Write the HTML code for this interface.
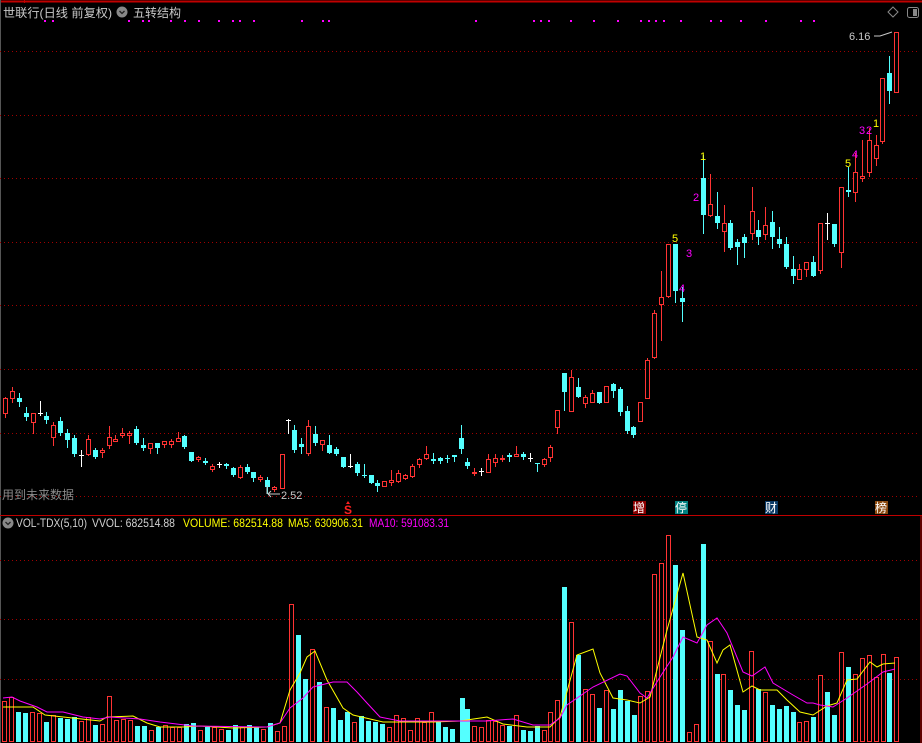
<!DOCTYPE html>
<html><head><meta charset="utf-8">
<style>
html,body{margin:0;padding:0;background:#000;width:922px;height:743px;overflow:hidden}
svg{display:block}
text{font-family:"Liberation Sans","Noto Sans CJK SC",sans-serif}
</style></head><body>
<svg id="s" width="922" height="743" viewBox="0 0 922 743" xmlns="http://www.w3.org/2000/svg">
<rect width="922" height="743" fill="#000"/>
<line x1="0" y1="1.5" x2="922" y2="1.5" stroke="#c00000" stroke-width="2"/>
<line x1="24.5" y1="0" x2="24.5" y2="3" stroke="#c00000"/>
<line x1="0.5" y1="0" x2="0.5" y2="743" stroke="#555"/>
<line x1="921" y1="515" x2="921" y2="743" stroke="#c00000"/>
<g id="grid" stroke="#a00000" stroke-dasharray="1 3"></g>
<line x1="0" y1="515.5" x2="922" y2="515.5" stroke="#c00000"/>
<text x="3" y="17" fill="#c8c8c8" font-size="12" textLength="109" lengthAdjust="spacingAndGlyphs">世联行(日线 前复权)</text>
<circle cx="122" cy="12" r="5.5" fill="#888"/>
<path d="M119.5 11l2.5 2.5 2.5-2.5" stroke="#222" stroke-width="1.3" fill="none"/>
<text x="133" y="17" fill="#c8c8c8" font-size="12" textLength="48" lengthAdjust="spacingAndGlyphs">五转结构</text>
<path d="M893 7l5 5-5 5-5-5z" stroke="#888" fill="none"/>
<rect x="907.5" y="7.5" width="11" height="10" rx="2" stroke="#888" fill="none"/>
<rect x="913" y="9" width="4" height="7" fill="#888"/>
<g id="dots" fill="#ff00ff"></g>
<g id="candles"></g>
<g id="vol"></g>
<polyline id="ma5" fill="none" stroke="#ffff00" stroke-width="1"/>
<polyline id="ma10" fill="none" stroke="#ff00ff" stroke-width="1"/>
<text x="849" y="40" fill="#c8c8c8" font-size="11">6.16</text>
<path d="M874 36h6l12-4" stroke="#c8c8c8" fill="none"/>
<text x="281" y="499" fill="#c8c8c8" font-size="11">2.52</text>
<path d="M268 494h12M268 494l3-3M268 494l3 3M267 485v9" stroke="#c8c8c8" fill="none"/>
<text x="2" y="499" fill="#8a8a8a" font-size="12">用到未来数据</text>
<text x="344" y="514" fill="#ff2020" font-size="12" font-weight="bold">S</text>
<path d="M346 504l2-3 2 3z" fill="#ff2020"/>
<rect x="633" y="501" width="13" height="13" fill="#8b0000"/><text x="633" y="512" fill="#fff" font-size="12">增</text>
<rect x="675" y="501" width="13" height="13" fill="#008080"/><text x="675" y="512" fill="#fff" font-size="12">停</text>
<rect x="765" y="501" width="13" height="13" fill="#0b3a66"/><text x="765" y="512" fill="#fff" font-size="12">财</text>
<rect x="875" y="501" width="13" height="13" fill="#8b4a10"/><text x="875" y="512" fill="#fff" font-size="12">榜</text>
<g font-size="11">
<text x="672" y="242" fill="#ffff00">5</text>
<text x="679" y="292" fill="#ff00ff">4</text>
<text x="686" y="257" fill="#ff00ff">3</text>
<text x="693" y="201" fill="#ff00ff">2</text>
<text x="700" y="160" fill="#ffff00">1</text>
<text x="845" y="167" fill="#ffff00">5</text>
<text x="852" y="158" fill="#ff00ff">4</text>
<text x="859" y="134" fill="#ff00ff">3</text>
<text x="866" y="134" fill="#ff00ff">2</text>
<text x="873" y="127" fill="#ffff00">1</text>
</g>
<circle cx="8" cy="523" r="5.5" fill="#888"/>
<path d="M5.5 522l2.5 2.5 2.5-2.5" stroke="#222" stroke-width="1.3" fill="none"/>
<g font-size="12">
<text x="16" y="527" fill="#d0d0d0" textLength="71" lengthAdjust="spacingAndGlyphs">VOL-TDX(5,10)</text>
<text x="92" y="527" fill="#d0d0d0" textLength="83" lengthAdjust="spacingAndGlyphs">VVOL: 682514.88</text>
<text x="183" y="527" fill="#ffff00" textLength="100" lengthAdjust="spacingAndGlyphs">VOLUME: 682514.88</text>
<text x="288" y="527" fill="#ffff00" textLength="75" lengthAdjust="spacingAndGlyphs">MA5: 630906.31</text>
<text x="369" y="527" fill="#ff00ff" textLength="80" lengthAdjust="spacingAndGlyphs">MA10: 591083.31</text>
</g>
</svg>
<script>
var NS="http://www.w3.org/2000/svg";
function el(p,t,a){var e=document.createElementNS(NS,t);for(var k in a)e.setAttribute(k,a[k]);document.getElementById(p).appendChild(e);return e;}
[51,115,178,242,305,369,433,496,560,619,679].forEach(function(y){el("grid","line",{x1:0,y1:y+0.5,x2:920,y2:y+0.5});});
[44,52,128,142,148,170,184,198,218,232,239,253,301,322,328,475,533,540,548,570,593,617,640,648,655,663,680,710,720,740,765,800,813].forEach(function(x){el("dots","rect",{x:x,y:20,width:2,height:2});});
var R="#ff3333",C="#54ffff",W="#ffffff";
var z6=[[398,413,397,417,'r'],[391,398,387,402,'r'],[398,402,393,406,'c'],[413,417,407,420,'c'],[413,422,413,433,'r'],[413,414,401,415,'w'],[416,420,412,423,'c'],[425,437,422,445,'r'],[421,433,417,435,'c'],[433,440,429,447,'c'],[438,454,435,456,'c'],[455,456,450,466,'w'],[439,454,435,455,'r'],[450,457,448,458,'c'],[450,452,448,457,'r'],[437,445,426,448,'r'],[439,441,435,441,'r'],[433,435,428,437,'r'],[433,435,431,443,'r'],[429,443,426,444,'c'],[445,448,438,450,'c'],[443,448,443,453,'r'],[443,448,443,453,'c'],[441,444,441,447,'r'],[441,444,439,447,'r'],[438,441,432,441,'r'],[436,447,435,448,'c'],[452,461,452,461,'c'],[457,459,456,461,'r'],[461,463,458,464,'c'],[466,469,464,471,'r'],[464,465,462,467,'w'],[464,466,463,468,'c'],[468,475,467,476,'c'],[467,477,465,478,'r'],[467,472,464,473,'c'],[472,478,472,481,'c'],[477,479,475,481,'r'],[480,487,477,493,'c'],[487,489,486,491,'r']];
var cs=[];z6.forEach(function(d,i){cs.push([Math.round(5+6.9*i)].concat(d));});
var rest=[[282,454,488,454,488,'r'],[288,420,421,419,433,'w'],[294,430,450,425,452,'c'],[301,444,447,438,453,'c'],[308,426,453,420,455,'r'],[315,434,443,426,445,'c'],[322,440,444,440,450,'r'],[329,445,453,435,453,'c'],[336,449,454,447,455,'c'],[343,457,467,457,467,'c'],[350,466,467,454,467,'w'],[357,464,473,462,475,'c'],[364,475,476,464,477,'c'],[371,475,483,475,483,'c'],[377,483,486,480,491,'c'],[384,481,486,481,486,'r'],[391,480,482,470,485,'r'],[398,473,481,470,482,'r'],[405,475,478,474,479,'r'],[412,466,476,464,477,'r'],[419,459,464,458,467,'r'],[426,454,458,446,459,'r'],[433,459,461,453,463,'c'],[440,458,461,457,463,'c'],[447,458,459,455,462,'c'],[454,455,457,455,461,'c'],[461,438,449,425,453,'c'],[467,462,466,458,468,'c'],[474,472,473,468,475,'r'],[481,471,472,468,475,'w'],[488,459,472,454,472,'r'],[495,458,462,454,466,'r'],[502,458,459,455,461,'r'],[509,455,457,453,461,'c'],[516,454,456,446,456,'r'],[523,454,457,452,459,'c'],[530,458,459,453,461,'w'],[537,463,464,463,471,'c'],[544,459,464,458,466,'r'],[550,447,457,445,461,'r'],[557,410,427,410,433,'r'],[564,373,392,373,410,'c'],[571,377,411,370,411,'r'],[578,387,397,378,397,'c'],[585,397,403,395,407,'r'],[592,393,402,390,402,'r'],[599,392,403,392,403,'c'],[606,386,402,386,402,'r'],[613,384,391,383,397,'c'],[620,389,412,387,415,'c'],[627,411,431,406,433,'c'],[633,427,435,426,437,'c'],[640,402,421,402,421,'r'],[647,360,398,358,398,'r'],[654,313,357,310,358,'r'],[661,297,304,271,340,'r'],[668,244,296,244,297,'r'],[675,244,291,244,302,'c'],[682,298,302,287,321,'c'],[703,178,215,155,233,'c'],[710,204,215,174,216,'r'],[717,216,223,192,228,'c'],[724,223,231,205,251,'r'],[730,223,248,220,249,'c'],[737,242,247,239,264,'c'],[744,237,243,234,257,'c'],[752,211,233,187,239,'r'],[758,230,237,220,244,'c'],[765,225,234,207,239,'r'],[772,222,237,211,248,'c'],[779,239,244,227,247,'c'],[786,244,267,237,268,'c'],[793,269,276,256,283,'c'],[799,269,279,264,279,'r'],[806,262,269,262,276,'r'],[813,262,276,256,276,'c'],[820,223,270,223,273,'r'],[827,223,224,213,239,'w'],[834,224,244,224,246,'c'],[841,187,252,187,267,'r'],[848,190,192,167,196,'c'],[855,172,192,153,201,'r'],[862,176,178,140,181,'r'],[869,140,172,128,176,'r'],[876,145,158,135,165,'r'],[882,78,141,78,143,'r'],[889,73,91,56,103,'c'],[896,32,92,32,92,'r']];
cs=cs.concat(rest);
cs.forEach(function(d){var x=d[0],bt=d[1],bb=d[2],hi=d[3],lo=d[4],t=d[5];
var col=t=='r'?R:(t=='c'?C:W);
el("candles","line",{x1:x+0.5,y1:hi,x2:x+0.5,y2:lo+1,stroke:col});
if(t=='w'){el("candles","line",{x1:x-2,y1:bt+0.5,x2:x+3,y2:bt+0.5,stroke:col});}
else if(t=='r'){el("candles","rect",{x:x-1.5,y:bt+0.5,width:4,height:Math.max(bb-bt,1),stroke:col,fill:"#000"});}
else{el("candles","rect",{x:x-2,y:bt,width:5,height:Math.max(bb-bt,1),fill:col});}
});
var v8="701r,697r,712c,713c,712r,713r,722c,715r,718c,719c,717c,721r,717r,725c,724r,696r,720r,719r,720r,726c,726c,730r,727c,725r,727r,727r,724c,723c,730r,727c,727r,729r,730c,725c,727r,725c,727c,729r,723c,731r,726r,604r,635c,679c,649r,682c,707r,708c,720c,712c,722r,716c,721c,722c,724c,727r,715r,718r,730r,718r,722r,712r,722c,727c,729c".split(",");
var vb=[];v8.forEach(function(s,i){vb.push([2+7*i,parseInt(s),s.slice(-1)]);});
var z9=[[0,505,'c'],[15,537,'c'],[37,589,'r'],[58,592,'r'],[79,570,'r'],[100,572,'r'],[121,585,'r'],[142,588,'c'],[163,556,'r'],[184,600,'c'],[205,603,'c'],[226,588,'c'],[247,600,'r'],[265,547,'r'],[286,510,'r'],[306,170,'c'],[328,277,'r'],[349,375,'c'],[370,477,'r'],[391,492,'r'],[412,533,'c'],[433,480,'r'],[454,537,'c'],[475,480,'c'],[496,512,'c'],[517,555,'c'],[535,498,'r'],[556,483,'r'],[577,132,'r'],[598,100,'r'],[619,15,'r'],[640,105,'c'],[661,300,'c'],[682,606,'r'],[703,582,'r'],[724,42,'c'],[745,333,'r'],[766,432,'c'],[784,432,'r'],[805,480,'c'],[826,525,'c'],[847,540,'c'],[868,363,'r'],[889,478,'c'],[910,486,'r'],[931,525,'c'],[952,537,'c'],[973,528,'c'],[994,546,'c'],[1012,576,'r'],[1033,573,'r'],[1054,561,'c'],[1075,436,'r'],[1096,486,'c'],[1117,555,'c'],[1138,366,'r'],[1159,411,'c'],[1180,432,'r'],[1201,384,'r'],[1222,375,'r'],[1243,441,'r'],[1264,372,'r'],[1282,429,'c'],[1303,381,'r']];
z9.forEach(function(d){vb.push([Math.round(460+d[0]/3),Math.round(530+d[1]/3),d[2]]);});
vb.forEach(function(d){var x=d[0],y=d[1];
if(d[2]=='r')el("vol","rect",{x:x+0.5,y:y+0.5,width:4,height:741-y,stroke:R,fill:"#000"});
else el("vol","rect",{x:x,y:y,width:5,height:742-y,fill:C});});
var m5="3,707 33,707 45,715 100,721 107,717 133,716 147,723 160,727 183,727 200,726 233,728 267,727 280,723 290,690 300,673 307,657 315,651 327,680 343,708 353,715 383,722 433,722 460,721 487,717 503,724 527,727 550,727 560,717 577,655 593,649 600,673 613,698 627,700 640,703 650,697 667,630 683,573 697,637 707,640 717,663 723,650 730,645 743,692 752,686 760,690 777,690 787,700 800,712 813,715 827,706 837,703 847,680 857,679 870,662 877,667 883,664 895,663";
var m10="3,698 12,697 20,701 37,707 47,712 63,712 83,717 100,719 110,717 140,719 160,722 193,726 267,727 280,723 290,708 303,698 313,687 333,682 347,682 357,692 367,703 380,717 400,721 460,721 487,721 513,719 533,725 550,725 560,718 567,705 593,687 620,674 627,676 640,693 647,698 660,677 673,657 683,637 697,643 707,625 717,618 727,633 743,672 752,676 765,667 773,683 793,695 807,703 813,703 820,705 833,707 847,698 867,684 883,672 895,669";
document.getElementById("ma5").setAttribute("points",m5);
document.getElementById("ma10").setAttribute("points",m10);
</script>
</body></html>
